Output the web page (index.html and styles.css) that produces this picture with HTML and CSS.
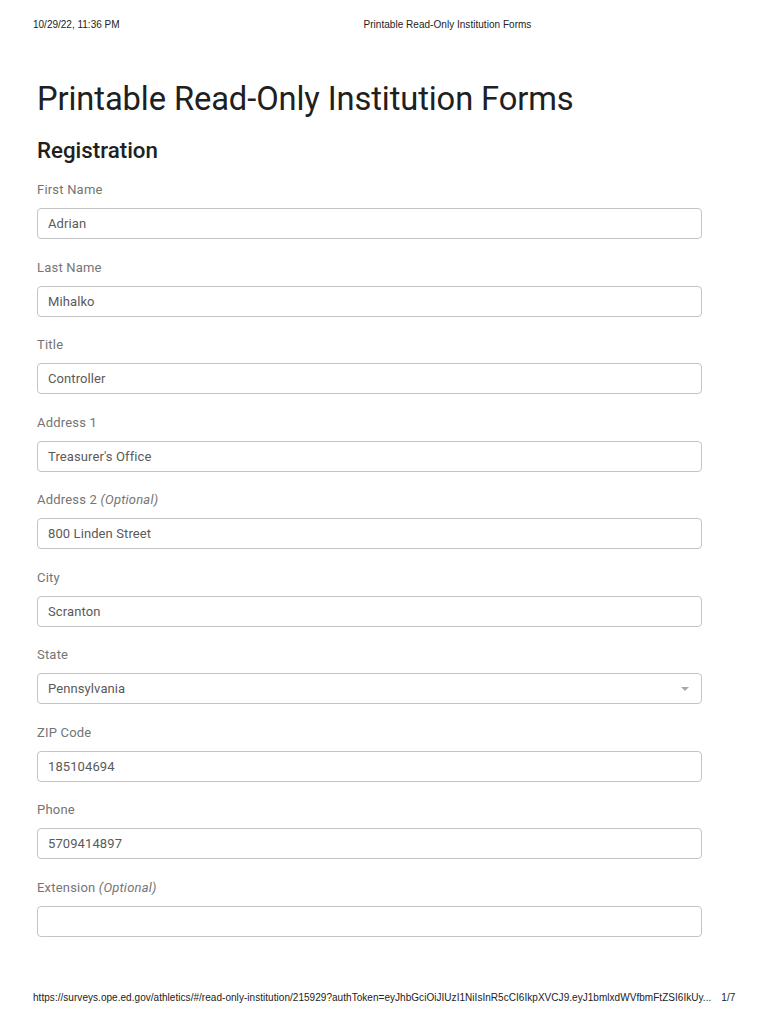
FILE: index.html
```html
<!DOCTYPE html>
<html>
<head>
<meta charset="utf-8">
<link rel="stylesheet" href="styles.css">
</head>
<body>
<div class="page">
  <header class="print-head">
    <span class="date">10/29/22, 11:36 PM</span>
    <span class="doc-title">Printable Read-Only Institution Forms</span>
  </header>
  <main class="content">
    <h1 class="title">Printable Read-Only Institution Forms</h1>
    <h2 class="section">Registration</h2>
    <div class="fields">
      <div class="field"><div class="label">First Name</div><div class="input">Adrian</div></div>
      <div class="field"><div class="label">Last Name</div><div class="input">Mihalko</div></div>
      <div class="field"><div class="label">Title</div><div class="input">Controller</div></div>
      <div class="field"><div class="label">Address 1</div><div class="input">Treasurer's Office</div></div>
      <div class="field"><div class="label">Address 2 <em>(Optional)</em></div><div class="input">800 Linden Street</div></div>
      <div class="field"><div class="label">City</div><div class="input">Scranton</div></div>
      <div class="field"><div class="label">State</div><div class="input select"><span>Pennsylvania</span><span class="caret"></span></div></div>
      <div class="field"><div class="label">ZIP Code</div><div class="input">185104694</div></div>
      <div class="field"><div class="label">Phone</div><div class="input">5709414897</div></div>
      <div class="field"><div class="label">Extension <em>(Optional)</em></div><div class="input"></div></div>
    </div>
  </main>
  <footer class="print-foot">
    <span class="url">https://surveys.ope.ed.gov/athletics/#/read-only-institution/215929?authToken=eyJhbGciOiJIUzI1NiIsInR5cCI6IkpXVCJ9.eyJ1bmlxdWVfbmFtZSI6IkUy...</span>
    <span class="pages">1/7</span>
  </footer>
</div>
</body>
</html>
```
FILE: styles.css
```css
html, body {
  margin: 0;
  padding: 0;
  background: #fff;
}
.page {
  width: 770px;
  height: 1024px;
  display: flex;
  flex-direction: column;
  box-sizing: border-box;
}
.print-head {
  display: flex;
  align-items: center;
  height: 12px;
  margin-top: 18px;
  padding-left: 33px;
  font-family: "Liberation Sans", Arial, sans-serif;
  font-size: 10px;
  color: #222;
}
.print-head .doc-title {
  margin-left: 244px;
  letter-spacing: 0.03px;
}
.content {
  padding: 0 68px 0 37px;
  font-family: Roboto, "Noto Sans", sans-serif;
}
.title {
  margin: 50px 0 0 0;
  font-size: 32.7px;
  font-weight: 400;
  line-height: 38px;
  color: #202020;
  letter-spacing: -0.1px;
}
.section {
  margin: 18px 0 0 0;
  font-size: 22.3px;
  font-weight: 500;
  line-height: 28px;
  color: #202020;
}
.fields {
  margin-top: 16px;
  display: flex;
  flex-direction: column;
  gap: 18.5px;
}
.field {
  display: flex;
  flex-direction: column;
}
.label {
  font-size: 13px;
  line-height: 20px;
  color: #757575;
  letter-spacing: 0.2px;
  margin-bottom: 8px;
}
.label em {
  font-style: italic;
}
.input {
  height: 31px;
  box-sizing: border-box;
  border: 1px solid #c4c4c4;
  border-radius: 4px;
  padding: 0 10px;
  display: flex;
  align-items: center;
  font-size: 13px;
  color: #5a5a5a;
  letter-spacing: 0.1px;
}
.select {
  justify-content: space-between;
  padding-right: 12px;
}
.caret {
  width: 0;
  height: 0;
  border-left: 4px solid transparent;
  border-right: 4px solid transparent;
  border-top: 4px solid #a8a8a8;
  margin-top: 1px;
}
.print-foot {
  margin-top: auto;
  margin-bottom: 21px;
  display: flex;
  align-items: center;
  height: 12px;
  padding-left: 33px;
  font-family: "Liberation Sans", Arial, sans-serif;
  font-size: 10px;
  color: #222;
  letter-spacing: 0.04px;
}
.print-foot .pages {
  margin-left: 10px;
}
```
